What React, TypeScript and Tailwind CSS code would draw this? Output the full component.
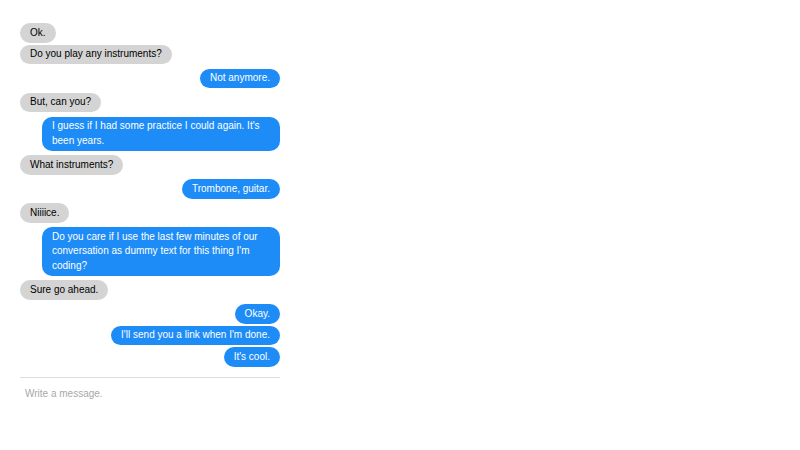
import React from 'react';

type Msg = { from: 'them' | 'me'; text: string };

const messages: Msg[] = [
  { from: 'them', text: 'Ok.' },
  { from: 'them', text: 'Do you play any instruments?' },
  { from: 'me', text: 'Not anymore.' },
  { from: 'them', text: 'But, can you?' },
  { from: 'me', text: "I guess if I had some practice I could again. It's been years." },
  { from: 'them', text: 'What instruments?' },
  { from: 'me', text: 'Trombone, guitar.' },
  { from: 'them', text: 'Niiiice.' },
  { from: 'me', text: "Do you care if I use the last few minutes of our conversation as dummy text for this thing I'm coding?" },
  { from: 'them', text: 'Sure go ahead.' },
  { from: 'me', text: 'Okay.' },
  { from: 'me', text: "I'll send you a link when I'm done." },
  { from: 'me', text: "It's cool." },
];

export default function App() {
  return (
    <div className="min-h-screen bg-white pl-5 pt-[23px]" style={{ fontFamily: '"Liberation Sans", Arial, sans-serif' }}>
      <div className="w-[260px]">
        <div className="flex flex-col">
          {messages.map((m, i) => {
            const newGroup = i > 0 && messages[i - 1].from !== m.from;
            const mine = m.from === 'me';
            return (
              <div
                key={i}
                className={`flex ${mine ? 'justify-end' : 'justify-start'} ${i === 0 ? '' : newGroup ? 'mt-[4.5px]' : 'mt-[2px]'}`}
              >
                <div
                  className={`max-w-[238px] rounded-[10px] px-[10px] py-[2.5px] text-[10px] leading-[14.5px] ${
                    mine ? 'bg-[#1e8cf7] text-white' : 'bg-[#d4d4d4] text-black'
                  }`}
                >
                  {m.text}
                </div>
              </div>
            );
          })}
        </div>
        <div className="mt-[10px] border-t border-[#dddddd]" />
        <div className="px-[5px] pt-[9px] text-[10px] leading-[14px] text-[#a8a8a8]">Write a message.</div>
      </div>
    </div>
  );
}
